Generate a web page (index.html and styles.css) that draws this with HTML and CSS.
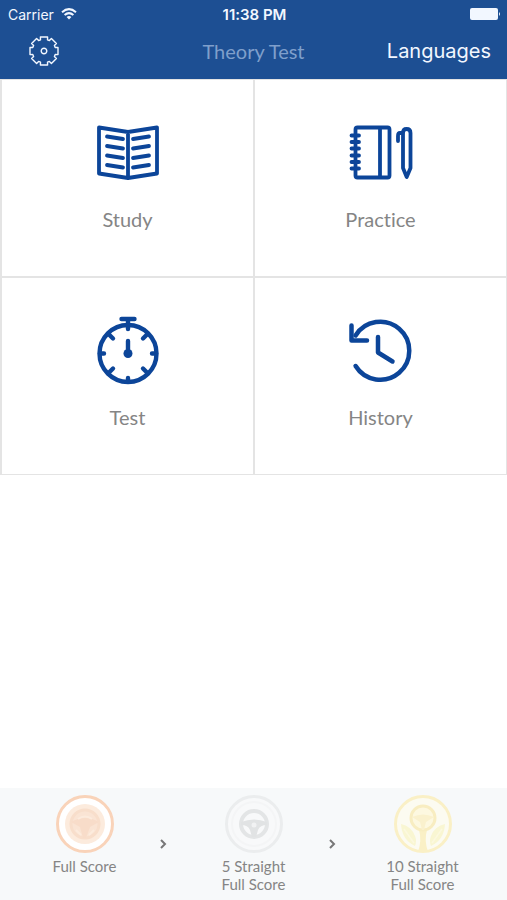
FILE: index.html
```html
<!DOCTYPE html>
<html lang="en">
<head>
<meta charset="utf-8">
<meta name="viewport" content="width=device-width, initial-scale=1">
<title>Theory Test</title>
<link rel="stylesheet" href="styles.css">
</head>
<body>
<header class="header">
  <div class="status">
    <span class="carrier">Carrier
      <svg width="16" height="12" viewBox="0 0 16 12" fill="none" stroke="currentColor" stroke-width="2" aria-hidden="true"><path d="M1 4.3Q8-2 15 4.3M3.6 7Q8 3.2 12.4 7"/><path d="M5.6 9Q8 7 10.4 9L8 11.5Z" fill="currentColor" stroke="none"/></svg>
    </span>
    <span class="time">11:38 PM</span>
    <svg class="battery" width="31" height="12" viewBox="0 0 31 12" fill="currentColor" aria-hidden="true"><rect width="28" height="12" rx="2"/><path d="M29 4Q31 6 29 8Z"/></svg>
  </div>
  <nav class="nav">
    <button class="settings" type="button" aria-label="Settings">
      <svg width="32" height="32" viewBox="-16 -16 32 32" fill="none" stroke="currentColor" stroke-width="1.4" stroke-linejoin="round"><path d="M-3.6-14H3.6L3.5-11.2 5.4-10.4 7.4-12.4 12.4-7.4 10.4-5.4 11.2-3.5 14-3.6V3.6L11.2 3.5 10.4 5.4 12.4 7.4 7.4 12.4 5.4 10.4 3.5 11.2 3.6 14H-3.6L-3.5 11.2-5.4 10.4-7.4 12.4-12.4 7.4-10.4 5.4-11.2 3.5-14 3.6V-3.6L-11.2-3.5-10.4-5.4-12.4-7.4-7.4-12.4-5.4-10.4-3.5-11.2Z"/><circle r="2.8"/></svg>
    </button>
    <h1 class="title">Theory Test</h1>
    <button class="languages" type="button">Languages</button>
  </nav>
</header>
<main class="tiles">
  <a class="tile" href="#study">
    <svg class="icon" viewBox="0 0 72 72"><path d="M7 11.500L36 16V62L7 57.500ZM65 11.500L36 16V62L65 57.500Z"/><path d="M15 20.500L31 23M15 30L31 32.500M15 39.500L31 42M15 49L31 51.500M57 20.500L41 23M57 30L41 32.500M57 39.500L41 42M57 49L41 51.500"/></svg>
    <span>Study</span>
  </a>
  <a class="tile" href="#practice">
    <svg class="icon" viewBox="0 0 72 72"><rect x="10.500" y="11.500" width="34" height="50" rx="2"/><path d="M35 12V61"/><path d="M6.500 19.500H14M6.500 26H14M6.500 32.500H14M6.500 39.500H14M6.500 46H14M6.500 52.500H14"/><path d="M58 52V17Q58 13 61.500 13Q65.500 13 65.500 17V52L61.700 61Z"/><path d="M57.500 17H55Q53 17 53 20V25"/></svg>
    <span>Practice</span>
  </a>
  <a class="tile" href="#test">
    <svg class="icon" viewBox="0 0 72 72"><g stroke-width="4.400"><circle cx="36" cy="39.500" r="28.500"/><path d="M29.500 5H42.500M36 5V15M36 27V41M36 64V67M8 39.500H12M60 39.500H64M17 20.500L21 24.500M55 20.500L51 24.500M17 58.500L21 54.500M55 58.500L51 54.500"/></g><circle class="hub" cx="36" cy="39.500" r="4.500"/></svg>
    <span>Test</span>
  </a>
  <a class="tile" href="#history">
    <svg class="icon" viewBox="0 0 72 72"><g stroke-width="4.500"><path d="M10.600 52A29 29 0 1 0 10.600 21.500"/><path d="M6.500 11.500V26.500H22M33 23V38.500L47.500 47.500"/></g></svg>
    <span>History</span>
  </a>
</main>
<footer class="awards">
  <div class="award">
    <svg class="badge" viewBox="0 0 58 58" fill="none"><circle cx="29" cy="29" r="27.500" fill="#fff" stroke="#f9d3b9" stroke-width="3"/><circle cx="29" cy="29" r="20" fill="#fcebdd"/><circle cx="29" cy="29" r="14" fill="#fae4d4" stroke="#f8decb" stroke-width="3"/><path d="M15 27Q29 19 43 27L34 32 30 43H27L24 32Z" fill="#f8dcc9"/><path d="M20 35L25 40M38 35L33 40M22 24Q29 19 36 24" stroke="#fcebdd" stroke-width="2"/></svg>
    <span>Full Score</span>
    <svg class="chevron" viewBox="0 0 8 12"><path d="M2 2L6 6 2 10"/></svg>
  </div>
  <div class="award">
    <svg class="badge" viewBox="0 0 58 58" fill="none"><circle cx="29" cy="29" r="27.500" fill="#f8f9fa" stroke="#ebedee" stroke-width="3"/><circle cx="29" cy="29" r="22" stroke="#f4f5f6" stroke-width="2"/><circle cx="29" cy="29" r="13" stroke="#e3e5e6" stroke-width="4"/><path d="M16 27Q29 22 42 27V30Q35 30 33 35L31 42H27L25 35Q23 30 16 30Z" fill="#e1e3e4"/><circle cx="29" cy="30" r="2.500" fill="#f1f2f3"/></svg>
    <span>5 Straight<br>Full Score</span>
    <svg class="chevron" viewBox="0 0 8 12"><path d="M2 2L6 6 2 10"/></svg>
  </div>
  <div class="award">
    <svg class="badge" viewBox="0 0 58 58" fill="none"><circle cx="29" cy="29" r="27.500" fill="#fcfbf1" stroke="#faf0c6" stroke-width="3"/><path d="M24 57Q28 45 25 35H33Q30 45 34 57Z" fill="#faf0c6"/><circle cx="29" cy="23" r="12" fill="#fdf8e0" stroke="#f8edc1" stroke-width="3"/><path d="M18 22Q29 17 40 22L32 27 30 35H28L26 27Z" fill="#faf1cd"/><path d="M7 29Q17 31 21 41 23 46 21 51 8 45 7 29ZM51 29Q41 31 37 41 35 46 37 51 50 45 51 29Z" fill="#f9f6d2"/><path d="M10 34L20 48M48 34L38 48" stroke="#fcf9df" stroke-width="1.500"/></svg>
    <span>10 Straight<br>Full Score</span>
  </div>
</footer>
</body>
</html>
```
FILE: styles.css
```css
* { box-sizing: border-box; }
body {
  margin: 0;
  min-height: 100vh;
  display: flex;
  flex-direction: column;
  background: #fff;
  font-family: Lato, sans-serif;
  font-variant-ligatures: none;
}
button {
  padding: 0;
  border: 0;
  background: none;
  color: inherit;
  font: inherit;
}
.header {
  height: 79px;
  background: #1d4f93;
  color: #f2f7ff;
  font-family: Inter, sans-serif;
}
.status, .nav {
  display: grid;
  grid-template-columns: 1fr auto 1fr;
  align-items: center;
}
.status {
  height: 28px;
  padding: 0 6px 0 8px;
  font-size: 14px;
}
.carrier {
  display: flex;
  align-items: center;
  gap: 7px;
}
.time {
  font-size: 15px;
  font-weight: 600;
}
.battery { justify-self: end; }
.nav {
  height: 46px;
  padding: 0 16px;
}
.settings {
  display: flex;
  justify-self: start;
  margin-left: 12px;
}
.title {
  margin: 0;
  color: #7f9fcb;
  font: 400 20px/24px Lato, sans-serif;
}
.languages {
  justify-self: end;
  font-size: 20px;
  line-height: 24px;
}
.tiles {
  display: grid;
  grid-template-columns: 1fr 1fr;
  gap: 2px;
  padding: 1px 1px 1px 2px;
  background: #e4e4e4;
}
.tile {
  display: flex;
  flex-direction: column;
  align-items: center;
  gap: 19px;
  height: 196px;
  padding-top: 36px;
  background: #fff;
  color: #858585;
  font-size: 20px;
  line-height: 24px;
  text-decoration: none;
}
.icon {
  width: 72px;
  height: 72px;
  fill: none;
  stroke: #0c4599;
  stroke-width: 3.8;
  stroke-linecap: round;
  stroke-linejoin: round;
}
.icon .hub {
  fill: #0c4599;
  stroke: none;
}
.awards {
  display: grid;
  grid-template-columns: repeat(3, 1fr);
  min-height: 112px;
  margin-top: auto;
  padding-top: 7px;
  background: #f7f9fa;
}
.award {
  position: relative;
  display: flex;
  flex-direction: column;
  align-items: center;
  gap: 4px;
  color: #858585;
  font-size: 15px;
  line-height: 18px;
  text-align: center;
}
.badge {
  width: 58px;
  height: 58px;
}
.chevron {
  position: absolute;
  top: 43px;
  right: 2px;
  width: 8px;
  height: 12px;
  fill: none;
  stroke: #777;
  stroke-width: 2;
}
```
